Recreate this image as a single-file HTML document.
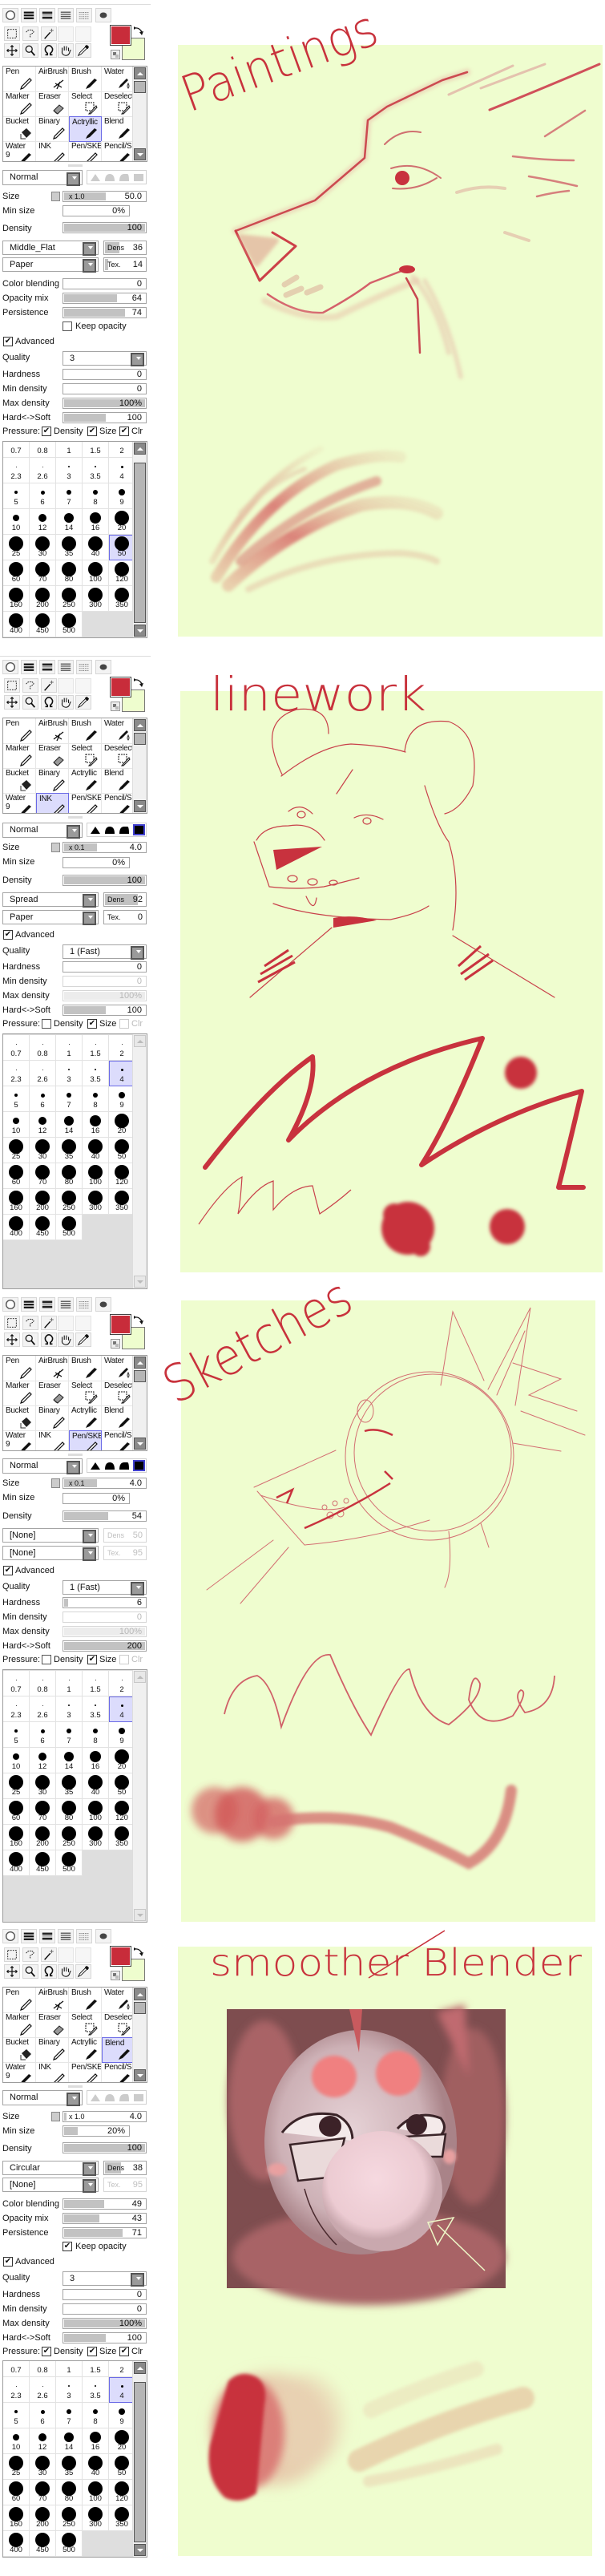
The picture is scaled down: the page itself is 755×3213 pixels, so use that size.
<!DOCTYPE html>
<html><head><meta charset="utf-8">
<style>
*{box-sizing:border-box;margin:0;padding:0}
body{width:755px;height:3213px;background:#fff;position:relative;overflow:hidden;font-family:"Liberation Sans",sans-serif;font-size:11px;color:#111}
.a{position:absolute}
.pan{position:absolute;left:0;width:190px;height:800px}
.hl{position:absolute;left:0;width:188px;height:1px;background:#dcdcdc}
.b{position:absolute;width:20px;height:18px;border:1px solid #d6d6d6;background:#f3f3f3}
.b svg{width:100%;height:100%;display:block}
.e{position:absolute;width:20px;height:19px;border:1px solid #e4e4e4;background:#f6f6f6}
.red{position:absolute;left:137px;top:31px;width:27px;height:26px;background:#c82c3a;border:1px solid #444;z-index:2;box-shadow:0 0 0 1px #fff inset}
.grn{position:absolute;left:152px;top:47px;width:29px;height:28px;background:#eefdce;border:1px solid #777}
.tg{position:absolute;left:3px;top:82px;width:181px;height:120px;border:1px solid #9c9c9c;background:#fff;overflow:hidden}
.tc{position:absolute;width:41px;height:32px;border-right:1px solid #e6e6e6;border-bottom:1px solid #e6e6e6;font-size:10px;padding:1px 0 0 3px;white-space:nowrap;overflow:hidden;letter-spacing:-.3px}
.tc svg{position:absolute;right:4px;bottom:2px;width:16px;height:16px}
.tc.s{background:#dcdcfc;border:1px solid #6a6ae6}
.sb{position:absolute;right:0;top:0;width:18px;height:100%;background:#f0f0f0;border-left:1px solid #ddd}
.ar{position:absolute;left:1px;width:15px;height:15px;border:1px solid #555;background:#8a8a8a}
.ar.u{top:1px}.ar.d{bottom:1px}
.ar:after{content:"";position:absolute;left:3px;border:4px solid transparent}
.ar.u:after{border-bottom:4px solid #fff;top:1px}
.ar.d:after{border-top:4px solid #fff;top:5px}
.ar.lt{background:#e8e8e8;border-color:#c8c8c8}
.ar.lt.u:after{border-bottom-color:#bbb}.ar.lt.d:after{border-top-color:#bbb}
.th{position:absolute;left:1px;width:15px;border:1px solid #555;background:#b6b6b6}
.lb{position:absolute;left:3px;font-size:11px;white-space:nowrap}
.sl{position:absolute;left:78px;width:105px;height:14px;border:1px solid #a4a4a4;background:#fff}
.sl i{position:absolute;left:1px;top:1px;bottom:1px;background:#c2c2c2}
.sl b{position:absolute;right:5px;top:0;font-weight:normal;line-height:12px;font-size:11px}
.sl u{position:absolute;left:7px;top:0;text-decoration:none;line-height:12px;font-size:9px}
.sl.dis{border-color:#d6d6d6}.sl.dis b{color:#b8b8b8}.sl.dis i{background:#ececec}
.dd{position:absolute;left:3px;width:120px;height:18px;border:1px solid #a4a4a4;background:#fff;padding-left:8px;line-height:16px;font-size:11px}
.dd:after{content:"";position:absolute;right:2px;top:1px;width:13px;height:13px;border:2px solid #555;background:#9a9a9a}
.dd:before{content:"";position:absolute;right:6px;top:6px;border:3px solid transparent;border-top:4px solid #fff;z-index:2}
.sm{position:absolute;left:129px;width:54px;height:18px;border:1px solid #a4a4a4;background:#fff;font-size:9px;line-height:16px}
.sm i{position:absolute;left:1px;top:1px;bottom:1px;background:#c2c2c2}
.sm u{position:absolute;left:4px;text-decoration:none}
.sm b{position:absolute;right:4px;font-weight:normal;font-size:11px}
.sm.dis{border-color:#d6d6d6;color:#c0c0c0}
.cb{position:absolute;width:12px;height:12px;border:1px solid #333;background:#fff;font-size:10px;line-height:10px;text-align:center}
.cb.off{border-color:#555}.cb.dis{border-color:#ccc}
.bg{position:absolute;left:3px;width:181px;border:1px solid #9c9c9c;background:#dedede;overflow:hidden}
.cells{position:absolute;left:0;width:165px;display:flex;flex-wrap:wrap}
.c{position:relative;width:33px;height:32px;background:#fff;border-right:1px solid #e2e2e2;border-bottom:1px solid #e2e2e2;font-size:9.5px;text-align:center}
.c i{position:absolute;width:var(--d);height:var(--d);left:calc(50% - var(--d)/2);top:calc(11px - var(--d)/2);background:#000;border-radius:50%}
.c s{position:absolute;left:0;right:0;bottom:2px;text-decoration:none;line-height:11px}
.c.s{background:#dcdcfc;outline:1px solid #6a6ae6;outline-offset:-1px}
.shp{position:absolute;left:108px;width:75px;height:18px;border:1px solid #d0d0d0;background:#fff}
.nm{position:absolute;left:3px;width:100px;height:19px;border:1px solid #a4a4a4;background:#fff;padding-left:8px;line-height:17px;font-size:11px}
.nm:after{content:"";position:absolute;right:2px;top:2px;width:13px;height:13px;border:2px solid #555;background:#9a9a9a}
.nm:before{content:"";position:absolute;right:6px;top:7px;border:3px solid transparent;border-top:4px solid #fff;z-index:2}
.ttl{font-family:"DejaVu Sans","Liberation Sans",sans-serif;font-weight:200;fill:#c8323c}
</style></head><body>

<svg width="0" height="0" style="position:absolute">
<defs>
<symbol id="pen" viewBox="0 0 16 16"><path d="M2 15 L3 12 L13 2 L15 4 L5 14 Z" fill="#fff" stroke="#111" stroke-width="1.2"/></symbol>
<symbol id="brush" viewBox="0 0 16 16"><path d="M1 15 L3 11 L12 2 L15 4 L6 13 Z" fill="#111"/></symbol>
<symbol id="water" viewBox="0 0 16 16"><path d="M1 14 L3 10 L11 2 L13 4 L5 12 Z" fill="#111"/><path d="M13 8 Q15 12 13 14 Q11 12 13 8Z" fill="#fff" stroke="#333"/></symbol>
<symbol id="air" viewBox="0 0 16 16"><path d="M2 13 L14 4 M4 8 L12 13 M6 15 L10 6" stroke="#111" stroke-width="1.3" fill="none"/></symbol>
<symbol id="eras" viewBox="0 0 16 16"><path d="M2 11 L9 4 L14 8 L7 15 Z" fill="#999" stroke="#222"/><path d="M2 11 L5 14 L7 15" stroke="#222" fill="#fff"/></symbol>
<symbol id="sel" viewBox="0 0 16 16"><rect x="1" y="1" width="10" height="10" fill="none" stroke="#111" stroke-dasharray="2 1"/><path d="M5 15 L14 5 L15 7 L7 15Z" fill="#fff" stroke="#111"/></symbol>
<symbol id="bucket" viewBox="0 0 16 16"><path d="M3 7 L9 2 L15 8 L9 14 Z" fill="#222"/><path d="M2 9 L2 15 L8 15" fill="none" stroke="#333"/></symbol>
</defs></svg>

<svg class="a" style="left:0;top:0" width="755" height="3213" viewBox="0 0 755 3213">
<defs>
<linearGradient id="pk" x1="0" y1="1" x2="1" y2="0"><stop offset="0" stop-color="#e8c9a8"/><stop offset=".45" stop-color="#d8706c"/><stop offset="1" stop-color="#e5c0a0" stop-opacity=".3"/></linearGradient>
<radialGradient id="blob"><stop offset="0" stop-color="#c8343e"/><stop offset=".7" stop-color="#cc4a50" stop-opacity=".9"/><stop offset="1" stop-color="#d06060" stop-opacity="0"/></radialGradient>
<radialGradient id="face" cx=".45" cy=".45"><stop offset="0" stop-color="#e6d2d6"/><stop offset=".75" stop-color="#cdb1b6"/><stop offset="1" stop-color="#a98388"/></radialGradient>
<radialGradient id="snout" cx=".45" cy=".4"><stop offset="0" stop-color="#f6d9e0"/><stop offset=".8" stop-color="#eccbd2"/><stop offset="1" stop-color="#c9a8ae"/></radialGradient>
<filter id="bl2" x="-20%" y="-20%" width="140%" height="140%"><feGaussianBlur stdDeviation="2"/></filter>
<filter id="bl5" x="-30%" y="-30%" width="160%" height="160%"><feGaussianBlur stdDeviation="5"/></filter>
<filter id="bl9" x="-40%" y="-40%" width="180%" height="180%"><feGaussianBlur stdDeviation="9"/></filter>
</defs>

<!-- SECTION 1 -->
<rect x="222" y="56" width="530" height="738" fill="#effdcf"/>
<text class="ttl" x="236" y="140" transform="rotate(-20 236 140)" font-size="62" textLength="255" lengthAdjust="spacingAndGlyphs">Paintings</text>
<g fill="none" stroke-linecap="round" stroke-linejoin="round">
<path d="M294 288 L393 250 L455 197 L459 150 L483 133 L552 100 L583 90" stroke="#eac8b0" stroke-width="9" opacity=".6" filter="url(#bl2)"/>
<path d="M294 288 L393 250 L455 197 L459 150 L483 133 L552 100 L583 90" stroke="#cc4a50" stroke-width="2.5"/>
<path d="M611 137 Q690 105 748 80" stroke="#d0505a" stroke-width="3"/>
<path d="M560 118 Q600 100 640 82 M600 110 Q640 95 680 80" stroke="#e0a8a0" stroke-width="3" opacity=".7"/>
<path d="M294 288 L324 350 L369 307 L340 290" stroke="#cc4048" stroke-width="3"/>
<path d="M300 295 L320 330 L345 300 Z" fill="#e0a090" stroke="#e0a090" stroke-width="6" opacity=".6" filter="url(#bl2)"/>
<path d="M334 367 Q370 392 403 390 Q440 370 462 353 L514 333" stroke="#d4606a" stroke-width="2.5"/>
<path d="M330 375 Q380 400 420 395 Q470 370 520 350" stroke="#e8c0a8" stroke-width="8" opacity=".5" filter="url(#bl2)"/>
<ellipse cx="508" cy="336" rx="10" ry="5" fill="#c8323e" stroke="none"/>
<path d="M507 347 L521 373 L524 440" stroke="#c84850" stroke-width="2.5"/>
<path d="M515 345 Q545 380 560 440 M530 350 Q560 400 575 470" stroke="#e8c8b0" stroke-width="6" opacity=".6" filter="url(#bl2)"/>
<path d="M355 355 L370 346 M357 368 L376 360 M383 365 L400 358" stroke="#e4d0b0" stroke-width="7"/>
<ellipse cx="502" cy="222" rx="9" ry="9" fill="#c8323e" stroke="none"/>
<path d="M488 210 Q520 200 550 222 M490 235 Q520 238 545 222 M480 180 Q500 160 525 165" stroke="#d07070" stroke-width="2"/>
<path d="M640 195 Q680 200 716 200 M660 220 Q690 225 720 232 M670 245 Q690 240 710 238 M680 170 L730 138" stroke="#d06068" stroke-width="2.5" opacity=".8"/>
<path d="M570 240 Q600 230 630 235 M630 290 L660 300" stroke="#e0b0a0" stroke-width="4" opacity=".6"/>
<g opacity=".85" filter="url(#bl2)">
<path d="M270 720 Q330 620 420 580 Q470 565 500 570" stroke="url(#pk)" stroke-width="14"/>
<path d="M265 700 Q320 600 400 560" stroke="url(#pk)" stroke-width="8" opacity=".6"/>
<path d="M285 730 Q360 660 450 630 Q510 620 545 640" stroke="url(#pk)" stroke-width="16"/>
<path d="M300 700 Q380 630 470 600" stroke="#d46868" stroke-width="12" opacity=".6"/>
<path d="M310 735 Q400 690 500 690 Q530 692 545 700" stroke="#e4c0a4" stroke-width="8" opacity=".6"/>
<path d="M300 640 Q340 600 380 585" stroke="#e6c8aa" stroke-width="6" opacity=".7"/>
</g>
</g>

<!-- SECTION 2 -->
<rect x="225" y="862" width="527" height="725" fill="#effdcf"/>
<text class="ttl" x="262" y="886" font-size="58" textLength="270" lengthAdjust="spacingAndGlyphs">linework</text>
<g fill="none" stroke="#c8404a" stroke-width="1.2" stroke-linecap="round">
<path d="M352 966 Q320 900 370 885 Q410 880 410 915"/>
<path d="M505 937 Q510 895 560 900 Q600 915 590 980 Q575 1010 555 1015"/>
<path d="M351 968 Q400 930 438 928 Q480 930 506 938"/>
<path d="M320 1048 Q330 1030 360 1030 Q390 1025 405 1048"/>
<path d="M317 1050 L336 1106 Q370 1110 404 1106 Q430 1100 448 1095"/>
<path d="M341 1127 Q390 1145 487 1147 Q520 1140 535 1130"/>
<path d="M414 1157 L312 1244 M565 1167 L692 1244 M560 1050 Q575 1100 565 1160 M530 980 Q545 1030 560 1050"/>
<path d="M360 1012 Q375 1000 390 1015 M442 1020 Q458 1012 478 1022 M420 990 L440 960"/>
<ellipse cx="376" cy="1016" rx="5" ry="4"/><ellipse cx="458" cy="1024" rx="5" ry="4"/>
<ellipse cx="365" cy="1096" rx="6" ry="4"/><ellipse cx="390" cy="1100" rx="6" ry="4"/><ellipse cx="416" cy="1101" rx="5" ry="3"/>
<path d="M382 1118 Q392 1140 395 1120"/>
</g>
<path d="M341 1060 L402 1056 L345 1085 Z" fill="#c8323e"/>
<path d="M416 1145 Q440 1140 470 1148 L416 1157 Z" fill="#c8323e"/>
<path d="M330 1205 L360 1185 M325 1215 L365 1192 M322 1225 L368 1200 M572 1205 L600 1180 M575 1215 L610 1190 M580 1222 L615 1198" stroke="#c8323e" stroke-width="3"/>
<path d="M256 1456 Q330 1360 390 1318 Q395 1360 360 1422 Q450 1330 602 1295 Q560 1400 526 1453 Q620 1390 726 1361 Q710 1430 697 1481 L728 1481" fill="none" stroke="#c8323e" stroke-width="6" stroke-linejoin="round" stroke-linecap="round"/>
<g filter="url(#bl2)">
<circle cx="650" cy="1338" r="20" fill="#c8323e"/>
<circle cx="509" cy="1532" r="33" fill="#c8323e"/><circle cx="492" cy="1515" r="14" fill="#c8323e"/><circle cx="525" cy="1555" r="12" fill="#c8323e"/>
<circle cx="633" cy="1530" r="22" fill="#c8323e"/>
</g>
<path d="M248 1527 Q280 1480 302 1468 Q300 1500 297 1514 Q320 1480 341 1473 L341 1509 Q365 1480 390 1479 Q395 1500 399 1514 Q420 1500 438 1484" fill="none" stroke="#c8404a" stroke-width="1.2"/>

<!-- SECTION 3 -->
<rect x="226" y="1622" width="517" height="775" fill="#effdcf"/>
<text class="ttl" x="219" y="1752" transform="rotate(-28 219 1752)" font-size="64" textLength="255" lengthAdjust="spacingAndGlyphs">Sketches</text>
<g fill="none" stroke="#d06068" stroke-width="1" stroke-linecap="round" opacity=".9">
<circle cx="536" cy="1816" r="105"/><circle cx="540" cy="1812" r="98"/>
<path d="M550 1728 L565 1636 L604 1722 M609 1733 L662 1631 L643 1753 M620 1740 L655 1660"/>
<path d="M317 1855 L419 1809 M321 1860 L380 1927 Q460 1920 536 1896 M325 1865 Q400 1890 430 1880"/>
<path d="M341 1921 L258 1983 M360 1930 L300 2000 M560 1910 Q565 1960 555 1980 M600 1900 L610 1930"/>
<path d="M640 1700 L700 1720 L660 1740 L720 1760 M650 1760 L730 1790 M640 1800 L700 1810"/>
<ellipse cx="456" cy="1760" rx="10" ry="14"/>
<circle cx="405" cy="1880" r="3"/><circle cx="418" cy="1875" r="3"/><circle cx="432" cy="1872" r="3"/><circle cx="412" cy="1890" r="4"/><circle cx="425" cy="1888" r="4"/>
</g>
<path d="M380 1906 Q440 1880 487 1850 M455 1785 Q470 1780 490 1790 M480 1835 L490 1845" fill="none" stroke="#c8323e" stroke-width="2.5"/>
<path d="M345 1868 L365 1858 L358 1875" fill="none" stroke="#c8323e" stroke-width="2.5"/>
<path d="M280 2138 Q290 2095 321 2090 Q340 2100 351 2154 Q385 2060 412 2064 Q440 2130 463 2164 Q500 2080 511 2082 Q525 2140 560 2151 Q600 2120 599 2100 Q590 2080 585 2120 Q600 2160 640 2140 Q660 2110 650 2108 Q640 2115 655 2136 Q690 2130 692 2090" fill="none" stroke="#d06068" stroke-width="1.8"/>
<g opacity=".85">
<g filter="url(#bl5)">
<circle cx="268" cy="2258" r="29" fill="#d04a52" opacity=".7"/>
<circle cx="302" cy="2263" r="34" fill="#cc3a44" opacity=".8"/>
<circle cx="341" cy="2268" r="26" fill="#d04a52" opacity=".8"/>
</g>
<path d="M341 2272 Q420 2260 487 2279 Q540 2300 585 2324 Q630 2300 638 2233" fill="none" stroke="#d05a60" stroke-width="14" stroke-linecap="round" opacity=".8" filter="url(#bl2)"/>
</g>

<!-- SECTION 4 -->
<rect x="222" y="2428" width="517" height="760" fill="#effdcf"/>
<text class="ttl" x="262" y="2464" font-size="46" textLength="464" lengthAdjust="spacingAndGlyphs">smoother Blender</text>
<path d="M460 2467 L555 2408" stroke="#c8323c" stroke-width="1.5"/>
<rect x="283" y="2506" width="348" height="348" fill="#7e4d4f"/>
<g filter="url(#bl5)">
<ellipse cx="330" cy="2620" rx="45" ry="100" fill="#a96466"/>
<ellipse cx="590" cy="2640" rx="40" ry="110" fill="#a05e60"/>
<path d="M545 2510 L580 2500 L585 2590 Z" fill="#c06a70"/>
<ellipse cx="460" cy="2815" rx="170" ry="60" fill="#a86466"/>
</g>
<ellipse cx="450" cy="2672" rx="120" ry="140" fill="url(#face)"/>
<path d="M436 2506 L448 2560 L452 2506 Z" fill="#c85a5e"/>
<g filter="url(#bl2)">
<ellipse cx="417" cy="2590" rx="28" ry="26" fill="#f08080"/>
<ellipse cx="497" cy="2586" rx="28" ry="28" fill="#f08080"/>
<ellipse cx="346" cy="2706" rx="12" ry="8" fill="#e8a0a0"/><ellipse cx="561" cy="2690" rx="8" ry="9" fill="#e8a0a0"/>
</g>
<path d="M352 2660 Q375 2630 420 2638 Q440 2648 440 2670" fill="#f4eaea" stroke="#3a2428" stroke-width="3"/>
<ellipse cx="412" cy="2652" rx="14" ry="13" fill="#3c2228"/>
<path d="M496 2655 Q520 2630 550 2642 Q560 2655 548 2665" fill="#f4eaea" stroke="#3a2428" stroke-width="3"/>
<ellipse cx="520" cy="2650" rx="13" ry="13" fill="#3c2228"/>
<path d="M362 2675 L430 2667 L418 2715 L372 2720 Z" fill="#eadada" stroke="#3a2428" stroke-width="2.5"/>
<path d="M505 2665 L556 2662 L552 2690 L515 2690 Z" fill="#eadada" stroke="#3a2428" stroke-width="2.5"/>
<circle cx="477" cy="2733" r="75" fill="url(#snout)"/>
<path d="M380 2730 Q390 2770 420 2800" fill="none" stroke="#4a2a2e" stroke-width="1.5"/>
<path d="M534 2772 L566 2766 L546 2800 Z M546 2775 L605 2832" fill="none" stroke="#eef8c8" stroke-width="1.5"/>
<g filter="url(#bl9)">
<ellipse cx="340" cy="3030" rx="75" ry="70" fill="#e4b8a0" opacity=".7"/>
<ellipse cx="380" cy="3020" rx="50" ry="60" fill="#ead6b4" opacity=".6"/>
</g>
<g filter="url(#bl5)">
<ellipse cx="310" cy="3035" rx="45" ry="70" fill="#d86a6a" opacity=".8"/>
</g>
<path d="M285 2970 Q300 2955 320 2965 Q335 2975 330 3000 L320 3110 Q300 3125 280 3115 Q255 3090 262 3050 Z" fill="#c8323e" filter="url(#bl2)"/>
<g filter="url(#bl2)">
<path d="M448 3069 Q550 3020 653 2991" stroke="#e6c4a0" stroke-width="28" stroke-linecap="round" opacity=".7" fill="none"/>
<path d="M460 3095 Q540 3080 620 3055" stroke="#ead2b0" stroke-width="14" stroke-linecap="round" opacity=".55" fill="none"/>
<path d="M463 3006 Q530 2975 594 2955" stroke="#e8d8b4" stroke-width="20" stroke-linecap="round" opacity=".45" fill="none"/>
</g>
</svg>

<!-- ============ PANEL 1 (top 0) ============ -->
<div class="pan" style="top:0px">
<div class="hl" style="top:5px"></div>
<div class="b" style="left:3px;top:10px"><svg viewBox="0 0 20 18"><circle cx="10" cy="9" r="6" fill="#fff" stroke="#555" stroke-width="1.6"/></svg></div>
<div class="b" style="left:26px;top:10px"><svg viewBox="0 0 20 18"><g fill="#111"><rect x="3" y="4" width="14" height="2.5"/><rect x="3" y="8" width="14" height="2.5"/><rect x="3" y="12" width="14" height="2.5"/></g></svg></div>
<div class="b" style="left:49px;top:10px"><svg viewBox="0 0 20 18"><g fill="#222"><rect x="3" y="4" width="14" height="3"/><rect x="3" y="8" width="14" height="1.5" fill="#888"/><rect x="3" y="11" width="14" height="3"/></g></svg></div>
<div class="b" style="left:72px;top:10px"><svg viewBox="0 0 20 18"><g fill="#555"><rect x="3" y="4" width="14" height="1.5"/><rect x="3" y="7" width="14" height="1.5"/><rect x="3" y="10" width="14" height="1.5"/><rect x="3" y="13" width="14" height="1.5"/></g></svg></div>
<div class="b" style="left:95px;top:10px"><svg viewBox="0 0 20 18"><g fill="none" stroke="#555" stroke-dasharray="1 1"><path d="M3 5H17M3 8H17M3 11H17M3 14H17"/></g></svg></div>
<div class="b" style="left:119px;top:10px"><svg viewBox="0 0 20 18"><ellipse cx="10" cy="9" rx="5" ry="4" fill="#444"/></svg></div>
<div class="b" style="left:5px;top:33px"><svg viewBox="0 0 20 18"><rect x="4" y="3" width="12" height="12" fill="none" stroke="#111" stroke-dasharray="2 1.5"/></svg></div>
<div class="b" style="left:28px;top:33px"><svg viewBox="0 0 20 18"><path d="M4 7 Q6 3 12 4 Q17 6 12 9 Q8 10 10 14" fill="none" stroke="#111" stroke-dasharray="2 1"/></svg></div>
<div class="b" style="left:51px;top:33px"><svg viewBox="0 0 20 18"><path d="M4 16 L12 7" stroke="#111" stroke-width="1.6"/><path d="M14 2V7M11.5 4.5H16.5" stroke="#666"/></svg></div>
<div class="e" style="left:72px;top:33px"></div><div class="e" style="left:94px;top:33px"></div>
<div class="b" style="left:5px;top:54px"><svg viewBox="0 0 20 18"><path d="M10 2V16M3 9H17M8 4L10 2L12 4M8 14L10 16L12 14M5 7L3 9L5 11M15 7L17 9L15 11" stroke="#111" stroke-width="1.3" fill="none"/></svg></div>
<div class="b" style="left:28px;top:54px"><svg viewBox="0 0 20 18"><circle cx="8" cy="7" r="4.5" fill="none" stroke="#111" stroke-width="1.4"/><path d="M11 10L16 16" stroke="#111" stroke-width="2"/></svg></div>
<div class="b" style="left:51px;top:54px"><svg viewBox="0 0 20 18"><path d="M5 15H8V13Q4 10 5 6Q7 2 10 2Q13 2 15 6Q16 10 12 13V15H15" fill="none" stroke="#111" stroke-width="1.8"/></svg></div>
<div class="b" style="left:72px;top:54px"><svg viewBox="0 0 20 18"><path d="M5 10V5M8 9V3M11 9V3M14 10V5M5 10Q4 15 10 16Q15 16 16 10L17 8" fill="none" stroke="#111" stroke-width="1.2"/></svg></div>
<div class="b" style="left:94px;top:54px"><svg viewBox="0 0 20 18"><path d="M3 16L5 12L13 4L15 6L7 14Z" fill="#fff" stroke="#111"/><path d="M12 3L15 1L18 4L16 7Z" fill="#111"/></svg></div>
<div class="grn"></div><div class="red"></div>
<svg class="a" style="left:166px;top:32px" width="14" height="14" viewBox="0 0 14 14"><path d="M2 3Q8 2 11 8" fill="none" stroke="#111" stroke-width="1.3"/><path d="M8 8L11 12L13 7Z" fill="#111"/><path d="M1 1L4 3L1 5Z" fill="#111"/></svg>
<div class="a" style="left:138px;top:62px;width:12px;height:12px;border:1px solid #999;background:#eee"><div class="a" style="left:2px;top:2px;width:4px;height:4px;background:#777"></div><div class="a" style="left:5px;top:5px;width:4px;height:4px;background:#bbb"></div></div>
<div class="tg">
<div class="tc" style="left:0;top:0">Pen<svg><use href="#pen"/></svg></div>
<div class="tc" style="left:41px;top:0">AirBrush<svg><use href="#air"/></svg></div>
<div class="tc" style="left:82px;top:0">Brush<svg><use href="#brush"/></svg></div>
<div class="tc" style="left:123px;top:0">Water<svg><use href="#water"/></svg></div>
<div class="tc" style="left:0;top:31px">Marker<svg><use href="#pen"/></svg></div>
<div class="tc" style="left:41px;top:31px">Eraser<svg><use href="#eras"/></svg></div>
<div class="tc" style="left:82px;top:31px">Select<svg><use href="#sel"/></svg></div>
<div class="tc" style="left:123px;top:31px">Deselect<svg><use href="#sel"/></svg></div>
<div class="tc" style="left:0;top:62px">Bucket<svg><use href="#bucket"/></svg></div>
<div class="tc" style="left:41px;top:62px">Binary<svg><use href="#pen"/></svg></div>
<div class="tc s" style="left:82px;top:62px">Actryllic<svg><use href="#brush"/></svg></div>
<div class="tc" style="left:123px;top:62px">Blend<svg><use href="#brush"/></svg></div>
<div class="tc" style="left:0;top:93px">Water<br>9<svg><use href="#brush"/></svg></div>
<div class="tc" style="left:41px;top:93px">INK<svg><use href="#pen"/></svg></div>
<div class="tc" style="left:82px;top:93px">Pen/SKE<svg><use href="#pen"/></svg></div>
<div class="tc" style="left:123px;top:93px">Pencil/SI<svg><use href="#brush"/></svg></div>
<div class="sb"><div class="ar u"></div><div class="th" style="top:18px;height:15px"></div><div class="ar d"></div></div>
</div>
<div class="a" style="left:85px;top:205px;width:18px;height:3px;background:#ddd"></div>
<div class="nm" style="top:212px">Normal</div>
<div class="shp" style="top:212px"><svg width="73" height="16"><g fill="#ccc"><path d="M4 13L10 4L16 13Z"/><path d="M22 13Q22 4 28 4Q34 4 34 13Z"/><path d="M40 13Q40 4 46 4H50Q52 4 52 13Z"/><rect x="58" y="4" width="12" height="9"/></g></svg></div>
<div class="lb" style="top:239px">Size</div>
<div class="a" style="left:64px;top:239px;width:11px;height:12px;border:1px solid #888;background:#ccc"></div>
<div class="sl" style="top:238px"><i style="width:52px"></i><u>x 1.0</u><b>50.0</b></div>
<div class="lb" style="top:257px">Min size</div>
<div class="sl" style="top:256px;width:84px"><b>0%</b></div>
<div class="lb" style="top:279px">Density</div>
<div class="sl" style="top:277px"><i style="right:1px"></i><b>100</b></div>
<div class="dd" style="top:300px">Middle_Flat</div>
<div class="sm" style="top:300px"><i style="width:18px"></i><u>Dens</u><b>36</b></div>
<div class="dd" style="top:321px">Paper</div>
<div class="sm" style="top:321px"><i style="width:4px"></i><u>Tex.</u><b>14</b></div>
<div class="lb" style="top:348px">Color blending</div>
<div class="sl" style="top:347px"><b>0</b></div>
<div class="lb" style="top:366px">Opacity mix</div>
<div class="sl" style="top:365px"><i style="width:66px"></i><b>64</b></div>
<div class="lb" style="top:384px">Persistence</div>
<div class="sl" style="top:383px"><i style="width:76px"></i><b>74</b></div>
<div class="cb off" style="left:78px;top:401px"></div><div class="lb" style="left:94px;top:401px">Keep opacity</div>
<div class="cb" style="left:4px;top:420px">✔</div><div class="lb" style="left:19px;top:420px">Advanced</div>
<div class="lb" style="top:440px">Quality</div>
<div class="dd" style="left:78px;top:438px;width:105px">3</div>
<div class="lb" style="top:461px">Hardness</div><div class="sl" style="top:460px"><b>0</b></div>
<div class="lb" style="top:479px">Min density</div><div class="sl" style="top:478px"><b>0</b></div>
<div class="lb" style="top:497px">Max density</div><div class="sl" style="top:496px"><i style="right:1px"></i><b>100%</b></div>
<div class="lb" style="top:515px">Hard&lt;-&gt;Soft</div><div class="sl" style="top:514px"><i style="width:52px"></i><b>100</b></div>
<div class="lb" style="top:532px">Pressure:</div>
<div class="cb" style="left:52px;top:532px">✔</div><div class="lb" style="left:67px;top:532px">Density</div>
<div class="cb" style="left:109px;top:532px">✔</div><div class="lb" style="left:124px;top:532px">Size</div>
<div class="cb" style="left:149px;top:532px">✔</div><div class="lb" style="left:164px;top:532px">Clr</div>
<div class="bg" style="top:550px;height:246px">
<div class="cells" style="top:-12px">
<div class="c"><s>0.7</s></div><div class="c"><s>0.8</s></div><div class="c"><s>1</s></div><div class="c"><s>1.5</s></div><div class="c"><s>2</s></div>
<div class="c"><i style="--d:1px"></i><s>2.3</s></div><div class="c"><i style="--d:1px"></i><s>2.6</s></div><div class="c"><i style="--d:2px"></i><s>3</s></div><div class="c"><i style="--d:2px"></i><s>3.5</s></div><div class="c"><i style="--d:3px"></i><s>4</s></div>
<div class="c"><i style="--d:4px"></i><s>5</s></div><div class="c"><i style="--d:5px"></i><s>6</s></div><div class="c"><i style="--d:6px"></i><s>7</s></div><div class="c"><i style="--d:6px"></i><s>8</s></div><div class="c"><i style="--d:8px"></i><s>9</s></div>
<div class="c"><i style="--d:8px"></i><s>10</s></div><div class="c"><i style="--d:10px"></i><s>12</s></div><div class="c"><i style="--d:12px"></i><s>14</s></div><div class="c"><i style="--d:14px"></i><s>16</s></div><div class="c"><i style="--d:18px"></i><s>20</s></div>
<div class="c"><i style="--d:18px"></i><s>25</s></div><div class="c"><i style="--d:18px"></i><s>30</s></div><div class="c"><i style="--d:18px"></i><s>35</s></div><div class="c"><i style="--d:18px"></i><s>40</s></div><div class="c s"><i style="--d:18px"></i><s>50</s></div>
<div class="c"><i style="--d:18px"></i><s>60</s></div><div class="c"><i style="--d:18px"></i><s>70</s></div><div class="c"><i style="--d:18px"></i><s>80</s></div><div class="c"><i style="--d:18px"></i><s>100</s></div><div class="c"><i style="--d:18px"></i><s>120</s></div>
<div class="c"><i style="--d:18px"></i><s>160</s></div><div class="c"><i style="--d:18px"></i><s>200</s></div><div class="c"><i style="--d:18px"></i><s>250</s></div><div class="c"><i style="--d:18px"></i><s>300</s></div><div class="c"><i style="--d:18px"></i><s>350</s></div>
<div class="c"><i style="--d:18px"></i><s>400</s></div><div class="c"><i style="--d:18px"></i><s>450</s></div><div class="c"><i style="--d:18px"></i><s>500</s></div>
</div>
<div class="sb"><div class="ar u"></div><div class="th" style="top:26px;bottom:18px"></div><div class="ar d"></div></div>
</div>
</div>

<!-- ============ PANEL 2 (top 813) ============ -->
<div class="pan" style="top:813px">
<div class="hl" style="top:5px"></div>
<div class="b" style="left:3px;top:10px"><svg viewBox="0 0 20 18"><circle cx="10" cy="9" r="6" fill="#fff" stroke="#555" stroke-width="1.6"/></svg></div>
<div class="b" style="left:26px;top:10px"><svg viewBox="0 0 20 18"><g fill="#111"><rect x="3" y="4" width="14" height="2.5"/><rect x="3" y="8" width="14" height="2.5"/><rect x="3" y="12" width="14" height="2.5"/></g></svg></div>
<div class="b" style="left:49px;top:10px"><svg viewBox="0 0 20 18"><g fill="#222"><rect x="3" y="4" width="14" height="3"/><rect x="3" y="8" width="14" height="1.5" fill="#888"/><rect x="3" y="11" width="14" height="3"/></g></svg></div>
<div class="b" style="left:72px;top:10px"><svg viewBox="0 0 20 18"><g fill="#555"><rect x="3" y="4" width="14" height="1.5"/><rect x="3" y="7" width="14" height="1.5"/><rect x="3" y="10" width="14" height="1.5"/><rect x="3" y="13" width="14" height="1.5"/></g></svg></div>
<div class="b" style="left:95px;top:10px"><svg viewBox="0 0 20 18"><g fill="none" stroke="#555" stroke-dasharray="1 1"><path d="M3 5H17M3 8H17M3 11H17M3 14H17"/></g></svg></div>
<div class="b" style="left:119px;top:10px"><svg viewBox="0 0 20 18"><ellipse cx="10" cy="9" rx="5" ry="4" fill="#444"/></svg></div>
<div class="b" style="left:5px;top:33px"><svg viewBox="0 0 20 18"><rect x="4" y="3" width="12" height="12" fill="none" stroke="#111" stroke-dasharray="2 1.5"/></svg></div>
<div class="b" style="left:28px;top:33px"><svg viewBox="0 0 20 18"><path d="M4 7 Q6 3 12 4 Q17 6 12 9 Q8 10 10 14" fill="none" stroke="#111" stroke-dasharray="2 1"/></svg></div>
<div class="b" style="left:51px;top:33px"><svg viewBox="0 0 20 18"><path d="M4 16 L12 7" stroke="#111" stroke-width="1.6"/><path d="M14 2V7M11.5 4.5H16.5" stroke="#666"/></svg></div>
<div class="e" style="left:72px;top:33px"></div><div class="e" style="left:94px;top:33px"></div>
<div class="b" style="left:5px;top:54px"><svg viewBox="0 0 20 18"><path d="M10 2V16M3 9H17M8 4L10 2L12 4M8 14L10 16L12 14M5 7L3 9L5 11M15 7L17 9L15 11" stroke="#111" stroke-width="1.3" fill="none"/></svg></div>
<div class="b" style="left:28px;top:54px"><svg viewBox="0 0 20 18"><circle cx="8" cy="7" r="4.5" fill="none" stroke="#111" stroke-width="1.4"/><path d="M11 10L16 16" stroke="#111" stroke-width="2"/></svg></div>
<div class="b" style="left:51px;top:54px"><svg viewBox="0 0 20 18"><path d="M5 15H8V13Q4 10 5 6Q7 2 10 2Q13 2 15 6Q16 10 12 13V15H15" fill="none" stroke="#111" stroke-width="1.8"/></svg></div>
<div class="b" style="left:72px;top:54px"><svg viewBox="0 0 20 18"><path d="M5 10V5M8 9V3M11 9V3M14 10V5M5 10Q4 15 10 16Q15 16 16 10L17 8" fill="none" stroke="#111" stroke-width="1.2"/></svg></div>
<div class="b" style="left:94px;top:54px"><svg viewBox="0 0 20 18"><path d="M3 16L5 12L13 4L15 6L7 14Z" fill="#fff" stroke="#111"/><path d="M12 3L15 1L18 4L16 7Z" fill="#111"/></svg></div>
<div class="grn"></div><div class="red"></div>
<svg class="a" style="left:166px;top:32px" width="14" height="14" viewBox="0 0 14 14"><path d="M2 3Q8 2 11 8" fill="none" stroke="#111" stroke-width="1.3"/><path d="M8 8L11 12L13 7Z" fill="#111"/><path d="M1 1L4 3L1 5Z" fill="#111"/></svg>
<div class="a" style="left:138px;top:62px;width:12px;height:12px;border:1px solid #999;background:#eee"><div class="a" style="left:2px;top:2px;width:4px;height:4px;background:#777"></div><div class="a" style="left:5px;top:5px;width:4px;height:4px;background:#bbb"></div></div>
<div class="tg">
<div class="tc" style="left:0;top:0">Pen<svg><use href="#pen"/></svg></div>
<div class="tc" style="left:41px;top:0">AirBrush<svg><use href="#air"/></svg></div>
<div class="tc" style="left:82px;top:0">Brush<svg><use href="#brush"/></svg></div>
<div class="tc" style="left:123px;top:0">Water<svg><use href="#water"/></svg></div>
<div class="tc" style="left:0;top:31px">Marker<svg><use href="#pen"/></svg></div>
<div class="tc" style="left:41px;top:31px">Eraser<svg><use href="#eras"/></svg></div>
<div class="tc" style="left:82px;top:31px">Select<svg><use href="#sel"/></svg></div>
<div class="tc" style="left:123px;top:31px">Deselect<svg><use href="#sel"/></svg></div>
<div class="tc" style="left:0;top:62px">Bucket<svg><use href="#bucket"/></svg></div>
<div class="tc" style="left:41px;top:62px">Binary<svg><use href="#pen"/></svg></div>
<div class="tc" style="left:82px;top:62px">Actryllic<svg><use href="#brush"/></svg></div>
<div class="tc" style="left:123px;top:62px">Blend<svg><use href="#brush"/></svg></div>
<div class="tc" style="left:0;top:93px">Water<br>9<svg><use href="#brush"/></svg></div>
<div class="tc s" style="left:41px;top:93px">INK<svg><use href="#pen"/></svg></div>
<div class="tc" style="left:82px;top:93px">Pen/SKE<svg><use href="#pen"/></svg></div>
<div class="tc" style="left:123px;top:93px">Pencil/SI<svg><use href="#brush"/></svg></div>
<div class="sb"><div class="ar u"></div><div class="th" style="top:18px;height:15px"></div><div class="ar d"></div></div>
</div>
<div class="a" style="left:85px;top:205px;width:18px;height:3px;background:#ddd"></div>
<div class="nm" style="top:213px">Normal</div>
<div class="shp" style="top:213px"><svg width="73" height="16"><g fill="#000"><path d="M4 13L10 4L16 13Z"/><path d="M22 13Q22 4 28 4Q34 4 34 13Z"/><path d="M40 13Q40 4 46 4H50Q52 4 52 13Z"/><rect x="57" y="1" width="15" height="14" fill="#4040d0"/><rect x="59" y="3" width="11" height="10"/></g></svg></div>
<div class="lb" style="top:238px">Size</div>
<div class="a" style="left:64px;top:238px;width:11px;height:12px;border:1px solid #888;background:#ccc"></div>
<div class="sl" style="top:237px"><i style="width:41px"></i><u>x 0.1</u><b>4.0</b></div>
<div class="lb" style="top:256px">Min size</div>
<div class="sl" style="top:256px;width:84px"><b>0%</b></div>
<div class="lb" style="top:279px">Density</div>
<div class="sl" style="top:278px"><i style="right:1px"></i><b>100</b></div>
<div class="dd" style="top:300px">Spread</div>
<div class="sm" style="top:300px"><i style="right:10px"></i><u>Dens</u><b>92</b></div>
<div class="dd" style="top:322px">Paper</div>
<div class="sm" style="top:322px"><u>Tex.</u><b>0</b></div>
<div class="cb" style="left:4px;top:347px">✔</div><div class="lb" style="left:19px;top:347px">Advanced</div>
<div class="lb" style="top:367px">Quality</div>
<div class="dd" style="left:78px;top:365px;width:105px">1 (Fast)</div>
<div class="lb" style="top:387px">Hardness</div><div class="sl" style="top:386px"><b>0</b></div>
<div class="lb" style="top:405px">Min density</div><div class="sl dis" style="top:404px"><b>0</b></div>
<div class="lb" style="top:423px">Max density</div><div class="sl dis" style="top:422px"><i style="right:1px"></i><b>100%</b></div>
<div class="lb" style="top:441px">Hard&lt;-&gt;Soft</div><div class="sl" style="top:440px"><i style="width:52px"></i><b>100</b></div>
<div class="lb" style="top:458px">Pressure:</div>
<div class="cb off" style="left:52px;top:458px"></div><div class="lb" style="left:67px;top:458px">Density</div>
<div class="cb" style="left:109px;top:458px">✔</div><div class="lb" style="left:124px;top:458px">Size</div>
<div class="cb dis" style="left:149px;top:458px"></div><div class="lb" style="left:164px;top:458px;color:#bbb">Clr</div>
<div class="bg" style="top:476px;height:319px">
<div class="cells" style="top:1px">
<div class="c"><i style="--d:1px"></i><s>0.7</s></div><div class="c"><i style="--d:1px"></i><s>0.8</s></div><div class="c"><i style="--d:1px"></i><s>1</s></div><div class="c"><i style="--d:1px"></i><s>1.5</s></div><div class="c"><i style="--d:1px"></i><s>2</s></div>
<div class="c"><i style="--d:1px"></i><s>2.3</s></div><div class="c"><i style="--d:1px"></i><s>2.6</s></div><div class="c"><i style="--d:2px"></i><s>3</s></div><div class="c"><i style="--d:2px"></i><s>3.5</s></div><div class="c s"><i style="--d:3px"></i><s>4</s></div>
<div class="c"><i style="--d:4px"></i><s>5</s></div><div class="c"><i style="--d:5px"></i><s>6</s></div><div class="c"><i style="--d:6px"></i><s>7</s></div><div class="c"><i style="--d:6px"></i><s>8</s></div><div class="c"><i style="--d:8px"></i><s>9</s></div>
<div class="c"><i style="--d:8px"></i><s>10</s></div><div class="c"><i style="--d:10px"></i><s>12</s></div><div class="c"><i style="--d:12px"></i><s>14</s></div><div class="c"><i style="--d:14px"></i><s>16</s></div><div class="c"><i style="--d:18px"></i><s>20</s></div>
<div class="c"><i style="--d:18px"></i><s>25</s></div><div class="c"><i style="--d:18px"></i><s>30</s></div><div class="c"><i style="--d:18px"></i><s>35</s></div><div class="c"><i style="--d:18px"></i><s>40</s></div><div class="c"><i style="--d:18px"></i><s>50</s></div>
<div class="c"><i style="--d:18px"></i><s>60</s></div><div class="c"><i style="--d:18px"></i><s>70</s></div><div class="c"><i style="--d:18px"></i><s>80</s></div><div class="c"><i style="--d:18px"></i><s>100</s></div><div class="c"><i style="--d:18px"></i><s>120</s></div>
<div class="c"><i style="--d:18px"></i><s>160</s></div><div class="c"><i style="--d:18px"></i><s>200</s></div><div class="c"><i style="--d:18px"></i><s>250</s></div><div class="c"><i style="--d:18px"></i><s>300</s></div><div class="c"><i style="--d:18px"></i><s>350</s></div>
<div class="c"><i style="--d:18px"></i><s>400</s></div><div class="c"><i style="--d:18px"></i><s>450</s></div><div class="c"><i style="--d:18px"></i><s>500</s></div>
</div>
<div class="sb"><div class="ar u lt"></div><div class="ar d lt"></div></div>
</div>
</div>

<!-- ============ PANEL 3 (top 1608) ============ -->
<div class="pan" style="top:1608px">
<div class="b" style="left:3px;top:10px"><svg viewBox="0 0 20 18"><circle cx="10" cy="9" r="6" fill="#fff" stroke="#555" stroke-width="1.6"/></svg></div>
<div class="b" style="left:26px;top:10px"><svg viewBox="0 0 20 18"><g fill="#111"><rect x="3" y="4" width="14" height="2.5"/><rect x="3" y="8" width="14" height="2.5"/><rect x="3" y="12" width="14" height="2.5"/></g></svg></div>
<div class="b" style="left:49px;top:10px"><svg viewBox="0 0 20 18"><g fill="#222"><rect x="3" y="4" width="14" height="3"/><rect x="3" y="8" width="14" height="1.5" fill="#888"/><rect x="3" y="11" width="14" height="3"/></g></svg></div>
<div class="b" style="left:72px;top:10px"><svg viewBox="0 0 20 18"><g fill="#555"><rect x="3" y="4" width="14" height="1.5"/><rect x="3" y="7" width="14" height="1.5"/><rect x="3" y="10" width="14" height="1.5"/><rect x="3" y="13" width="14" height="1.5"/></g></svg></div>
<div class="b" style="left:95px;top:10px"><svg viewBox="0 0 20 18"><g fill="none" stroke="#555" stroke-dasharray="1 1"><path d="M3 5H17M3 8H17M3 11H17M3 14H17"/></g></svg></div>
<div class="b" style="left:119px;top:10px"><svg viewBox="0 0 20 18"><ellipse cx="10" cy="9" rx="5" ry="4" fill="#444"/></svg></div>
<div class="b" style="left:5px;top:33px"><svg viewBox="0 0 20 18"><rect x="4" y="3" width="12" height="12" fill="none" stroke="#111" stroke-dasharray="2 1.5"/></svg></div>
<div class="b" style="left:28px;top:33px"><svg viewBox="0 0 20 18"><path d="M4 7 Q6 3 12 4 Q17 6 12 9 Q8 10 10 14" fill="none" stroke="#111" stroke-dasharray="2 1"/></svg></div>
<div class="b" style="left:51px;top:33px"><svg viewBox="0 0 20 18"><path d="M4 16 L12 7" stroke="#111" stroke-width="1.6"/><path d="M14 2V7M11.5 4.5H16.5" stroke="#666"/></svg></div>
<div class="e" style="left:72px;top:33px"></div><div class="e" style="left:94px;top:33px"></div>
<div class="b" style="left:5px;top:54px"><svg viewBox="0 0 20 18"><path d="M10 2V16M3 9H17M8 4L10 2L12 4M8 14L10 16L12 14M5 7L3 9L5 11M15 7L17 9L15 11" stroke="#111" stroke-width="1.3" fill="none"/></svg></div>
<div class="b" style="left:28px;top:54px"><svg viewBox="0 0 20 18"><circle cx="8" cy="7" r="4.5" fill="none" stroke="#111" stroke-width="1.4"/><path d="M11 10L16 16" stroke="#111" stroke-width="2"/></svg></div>
<div class="b" style="left:51px;top:54px"><svg viewBox="0 0 20 18"><path d="M5 15H8V13Q4 10 5 6Q7 2 10 2Q13 2 15 6Q16 10 12 13V15H15" fill="none" stroke="#111" stroke-width="1.8"/></svg></div>
<div class="b" style="left:72px;top:54px"><svg viewBox="0 0 20 18"><path d="M5 10V5M8 9V3M11 9V3M14 10V5M5 10Q4 15 10 16Q15 16 16 10L17 8" fill="none" stroke="#111" stroke-width="1.2"/></svg></div>
<div class="b" style="left:94px;top:54px"><svg viewBox="0 0 20 18"><path d="M3 16L5 12L13 4L15 6L7 14Z" fill="#fff" stroke="#111"/><path d="M12 3L15 1L18 4L16 7Z" fill="#111"/></svg></div>
<div class="grn"></div><div class="red"></div>
<svg class="a" style="left:166px;top:32px" width="14" height="14" viewBox="0 0 14 14"><path d="M2 3Q8 2 11 8" fill="none" stroke="#111" stroke-width="1.3"/><path d="M8 8L11 12L13 7Z" fill="#111"/><path d="M1 1L4 3L1 5Z" fill="#111"/></svg>
<div class="a" style="left:138px;top:62px;width:12px;height:12px;border:1px solid #999;background:#eee"><div class="a" style="left:2px;top:2px;width:4px;height:4px;background:#777"></div><div class="a" style="left:5px;top:5px;width:4px;height:4px;background:#bbb"></div></div>
<div class="tg">
<div class="tc" style="left:0;top:0">Pen<svg><use href="#pen"/></svg></div>
<div class="tc" style="left:41px;top:0">AirBrush<svg><use href="#air"/></svg></div>
<div class="tc" style="left:82px;top:0">Brush<svg><use href="#brush"/></svg></div>
<div class="tc" style="left:123px;top:0">Water<svg><use href="#water"/></svg></div>
<div class="tc" style="left:0;top:31px">Marker<svg><use href="#pen"/></svg></div>
<div class="tc" style="left:41px;top:31px">Eraser<svg><use href="#eras"/></svg></div>
<div class="tc" style="left:82px;top:31px">Select<svg><use href="#sel"/></svg></div>
<div class="tc" style="left:123px;top:31px">Deselect<svg><use href="#sel"/></svg></div>
<div class="tc" style="left:0;top:62px">Bucket<svg><use href="#bucket"/></svg></div>
<div class="tc" style="left:41px;top:62px">Binary<svg><use href="#pen"/></svg></div>
<div class="tc" style="left:82px;top:62px">Actryllic<svg><use href="#brush"/></svg></div>
<div class="tc" style="left:123px;top:62px">Blend<svg><use href="#brush"/></svg></div>
<div class="tc" style="left:0;top:93px">Water<br>9<svg><use href="#brush"/></svg></div>
<div class="tc" style="left:41px;top:93px">INK<svg><use href="#pen"/></svg></div>
<div class="tc s" style="left:82px;top:93px">Pen/SKE<svg><use href="#pen"/></svg></div>
<div class="tc" style="left:123px;top:93px">Pencil/SI<svg><use href="#brush"/></svg></div>
<div class="sb"><div class="ar u"></div><div class="th" style="top:18px;height:15px"></div><div class="ar d"></div></div>
</div>
<div class="a" style="left:85px;top:205px;width:18px;height:3px;background:#ddd"></div>
<div class="nm" style="top:211px">Normal</div>
<div class="shp" style="top:211px"><svg width="73" height="16"><g fill="#000"><path d="M4 13L10 4L16 13Z"/><path d="M22 13Q22 4 28 4Q34 4 34 13Z"/><path d="M40 13Q40 4 46 4H50Q52 4 52 13Z"/><rect x="57" y="1" width="15" height="14" fill="#4040d0"/><rect x="59" y="3" width="11" height="10"/></g></svg></div>
<div class="lb" style="top:236px">Size</div>
<div class="a" style="left:64px;top:236px;width:11px;height:12px;border:1px solid #888;background:#ccc"></div>
<div class="sl" style="top:235px"><i style="width:41px"></i><u>x 0.1</u><b>4.0</b></div>
<div class="lb" style="top:254px">Min size</div>
<div class="sl" style="top:254px;width:84px"><b>0%</b></div>
<div class="lb" style="top:277px">Density</div>
<div class="sl" style="top:276px"><i style="width:55px"></i><b>54</b></div>
<div class="dd" style="top:298px">[None]</div>
<div class="sm dis" style="top:298px"><u>Dens</u><b>50</b></div>
<div class="dd" style="top:320px">[None]</div>
<div class="sm dis" style="top:320px"><u>Tex.</u><b>95</b></div>
<div class="cb" style="left:4px;top:345px">✔</div><div class="lb" style="left:19px;top:345px">Advanced</div>
<div class="lb" style="top:365px">Quality</div>
<div class="dd" style="left:78px;top:363px;width:105px">1 (Fast)</div>
<div class="lb" style="top:385px">Hardness</div><div class="sl" style="top:384px"><i style="width:5px"></i><b>6</b></div>
<div class="lb" style="top:403px">Min density</div><div class="sl dis" style="top:402px"><b>0</b></div>
<div class="lb" style="top:421px">Max density</div><div class="sl dis" style="top:420px"><i style="right:1px"></i><b>100%</b></div>
<div class="lb" style="top:439px">Hard&lt;-&gt;Soft</div><div class="sl" style="top:438px"><i style="right:1px"></i><b>200</b></div>
<div class="lb" style="top:456px">Pressure:</div>
<div class="cb off" style="left:52px;top:456px"></div><div class="lb" style="left:67px;top:456px">Density</div>
<div class="cb" style="left:109px;top:456px">✔</div><div class="lb" style="left:124px;top:456px">Size</div>
<div class="cb dis" style="left:149px;top:456px"></div><div class="lb" style="left:164px;top:456px;color:#bbb">Clr</div>
<div class="bg" style="top:474px;height:316px">
<div class="cells" style="top:1px">
<div class="c"><i style="--d:1px"></i><s>0.7</s></div><div class="c"><i style="--d:1px"></i><s>0.8</s></div><div class="c"><i style="--d:1px"></i><s>1</s></div><div class="c"><i style="--d:1px"></i><s>1.5</s></div><div class="c"><i style="--d:1px"></i><s>2</s></div>
<div class="c"><i style="--d:1px"></i><s>2.3</s></div><div class="c"><i style="--d:1px"></i><s>2.6</s></div><div class="c"><i style="--d:2px"></i><s>3</s></div><div class="c"><i style="--d:2px"></i><s>3.5</s></div><div class="c s"><i style="--d:3px"></i><s>4</s></div>
<div class="c"><i style="--d:4px"></i><s>5</s></div><div class="c"><i style="--d:5px"></i><s>6</s></div><div class="c"><i style="--d:6px"></i><s>7</s></div><div class="c"><i style="--d:6px"></i><s>8</s></div><div class="c"><i style="--d:8px"></i><s>9</s></div>
<div class="c"><i style="--d:8px"></i><s>10</s></div><div class="c"><i style="--d:10px"></i><s>12</s></div><div class="c"><i style="--d:12px"></i><s>14</s></div><div class="c"><i style="--d:14px"></i><s>16</s></div><div class="c"><i style="--d:18px"></i><s>20</s></div>
<div class="c"><i style="--d:18px"></i><s>25</s></div><div class="c"><i style="--d:18px"></i><s>30</s></div><div class="c"><i style="--d:18px"></i><s>35</s></div><div class="c"><i style="--d:18px"></i><s>40</s></div><div class="c"><i style="--d:18px"></i><s>50</s></div>
<div class="c"><i style="--d:18px"></i><s>60</s></div><div class="c"><i style="--d:18px"></i><s>70</s></div><div class="c"><i style="--d:18px"></i><s>80</s></div><div class="c"><i style="--d:18px"></i><s>100</s></div><div class="c"><i style="--d:18px"></i><s>120</s></div>
<div class="c"><i style="--d:18px"></i><s>160</s></div><div class="c"><i style="--d:18px"></i><s>200</s></div><div class="c"><i style="--d:18px"></i><s>250</s></div><div class="c"><i style="--d:18px"></i><s>300</s></div><div class="c"><i style="--d:18px"></i><s>350</s></div>
<div class="c"><i style="--d:18px"></i><s>400</s></div><div class="c"><i style="--d:18px"></i><s>450</s></div><div class="c"><i style="--d:18px"></i><s>500</s></div>
</div>
<div class="sb"><div class="ar u lt"></div><div class="ar d lt"></div></div>
</div>
</div>

<!-- ============ PANEL 4 (top 2396) ============ -->
<div class="pan" style="top:2396px">
<div class="b" style="left:3px;top:10px"><svg viewBox="0 0 20 18"><circle cx="10" cy="9" r="6" fill="#fff" stroke="#555" stroke-width="1.6"/></svg></div>
<div class="b" style="left:26px;top:10px"><svg viewBox="0 0 20 18"><g fill="#111"><rect x="3" y="4" width="14" height="2.5"/><rect x="3" y="8" width="14" height="2.5"/><rect x="3" y="12" width="14" height="2.5"/></g></svg></div>
<div class="b" style="left:49px;top:10px"><svg viewBox="0 0 20 18"><g fill="#222"><rect x="3" y="4" width="14" height="3"/><rect x="3" y="8" width="14" height="1.5" fill="#888"/><rect x="3" y="11" width="14" height="3"/></g></svg></div>
<div class="b" style="left:72px;top:10px"><svg viewBox="0 0 20 18"><g fill="#555"><rect x="3" y="4" width="14" height="1.5"/><rect x="3" y="7" width="14" height="1.5"/><rect x="3" y="10" width="14" height="1.5"/><rect x="3" y="13" width="14" height="1.5"/></g></svg></div>
<div class="b" style="left:95px;top:10px"><svg viewBox="0 0 20 18"><g fill="none" stroke="#555" stroke-dasharray="1 1"><path d="M3 5H17M3 8H17M3 11H17M3 14H17"/></g></svg></div>
<div class="b" style="left:119px;top:10px"><svg viewBox="0 0 20 18"><ellipse cx="10" cy="9" rx="5" ry="4" fill="#444"/></svg></div>
<div class="b" style="left:5px;top:33px"><svg viewBox="0 0 20 18"><rect x="4" y="3" width="12" height="12" fill="none" stroke="#111" stroke-dasharray="2 1.5"/></svg></div>
<div class="b" style="left:28px;top:33px"><svg viewBox="0 0 20 18"><path d="M4 7 Q6 3 12 4 Q17 6 12 9 Q8 10 10 14" fill="none" stroke="#111" stroke-dasharray="2 1"/></svg></div>
<div class="b" style="left:51px;top:33px"><svg viewBox="0 0 20 18"><path d="M4 16 L12 7" stroke="#111" stroke-width="1.6"/><path d="M14 2V7M11.5 4.5H16.5" stroke="#666"/></svg></div>
<div class="e" style="left:72px;top:33px"></div><div class="e" style="left:94px;top:33px"></div>
<div class="b" style="left:5px;top:54px"><svg viewBox="0 0 20 18"><path d="M10 2V16M3 9H17M8 4L10 2L12 4M8 14L10 16L12 14M5 7L3 9L5 11M15 7L17 9L15 11" stroke="#111" stroke-width="1.3" fill="none"/></svg></div>
<div class="b" style="left:28px;top:54px"><svg viewBox="0 0 20 18"><circle cx="8" cy="7" r="4.5" fill="none" stroke="#111" stroke-width="1.4"/><path d="M11 10L16 16" stroke="#111" stroke-width="2"/></svg></div>
<div class="b" style="left:51px;top:54px"><svg viewBox="0 0 20 18"><path d="M5 15H8V13Q4 10 5 6Q7 2 10 2Q13 2 15 6Q16 10 12 13V15H15" fill="none" stroke="#111" stroke-width="1.8"/></svg></div>
<div class="b" style="left:72px;top:54px"><svg viewBox="0 0 20 18"><path d="M5 10V5M8 9V3M11 9V3M14 10V5M5 10Q4 15 10 16Q15 16 16 10L17 8" fill="none" stroke="#111" stroke-width="1.2"/></svg></div>
<div class="b" style="left:94px;top:54px"><svg viewBox="0 0 20 18"><path d="M3 16L5 12L13 4L15 6L7 14Z" fill="#fff" stroke="#111"/><path d="M12 3L15 1L18 4L16 7Z" fill="#111"/></svg></div>
<div class="grn"></div><div class="red"></div>
<svg class="a" style="left:166px;top:32px" width="14" height="14" viewBox="0 0 14 14"><path d="M2 3Q8 2 11 8" fill="none" stroke="#111" stroke-width="1.3"/><path d="M8 8L11 12L13 7Z" fill="#111"/><path d="M1 1L4 3L1 5Z" fill="#111"/></svg>
<div class="a" style="left:138px;top:62px;width:12px;height:12px;border:1px solid #999;background:#eee"><div class="a" style="left:2px;top:2px;width:4px;height:4px;background:#777"></div><div class="a" style="left:5px;top:5px;width:4px;height:4px;background:#bbb"></div></div>
<div class="tg">
<div class="tc" style="left:0;top:0">Pen<svg><use href="#pen"/></svg></div>
<div class="tc" style="left:41px;top:0">AirBrush<svg><use href="#air"/></svg></div>
<div class="tc" style="left:82px;top:0">Brush<svg><use href="#brush"/></svg></div>
<div class="tc" style="left:123px;top:0">Water<svg><use href="#water"/></svg></div>
<div class="tc" style="left:0;top:31px">Marker<svg><use href="#pen"/></svg></div>
<div class="tc" style="left:41px;top:31px">Eraser<svg><use href="#eras"/></svg></div>
<div class="tc" style="left:82px;top:31px">Select<svg><use href="#sel"/></svg></div>
<div class="tc" style="left:123px;top:31px">Deselect<svg><use href="#sel"/></svg></div>
<div class="tc" style="left:0;top:62px">Bucket<svg><use href="#bucket"/></svg></div>
<div class="tc" style="left:41px;top:62px">Binary<svg><use href="#pen"/></svg></div>
<div class="tc" style="left:82px;top:62px">Actryllic<svg><use href="#brush"/></svg></div>
<div class="tc s" style="left:123px;top:62px">Blend<svg><use href="#brush"/></svg></div>
<div class="tc" style="left:0;top:93px">Water<br>9<svg><use href="#brush"/></svg></div>
<div class="tc" style="left:41px;top:93px">INK<svg><use href="#pen"/></svg></div>
<div class="tc" style="left:82px;top:93px">Pen/SKE<svg><use href="#pen"/></svg></div>
<div class="tc" style="left:123px;top:93px">Pencil/SI<svg><use href="#brush"/></svg></div>
<div class="sb"><div class="ar u"></div><div class="th" style="top:18px;height:15px"></div><div class="ar d"></div></div>
</div>
<div class="a" style="left:85px;top:205px;width:18px;height:3px;background:#ddd"></div>
<div class="nm" style="top:211px">Normal</div>
<div class="shp" style="top:211px"><svg width="73" height="16"><g fill="#ccc"><path d="M4 13L10 4L16 13Z"/><path d="M22 13Q22 4 28 4Q34 4 34 13Z"/><path d="M40 13Q40 4 46 4H50Q52 4 52 13Z"/><rect x="58" y="4" width="12" height="9"/></g></svg></div>
<div class="lb" style="top:238px">Size</div>
<div class="a" style="left:64px;top:238px;width:11px;height:12px;border:1px solid #888;background:#ccc"></div>
<div class="sl" style="top:237px"><i style="width:3px"></i><u>x 1.0</u><b>4.0</b></div>
<div class="lb" style="top:256px">Min size</div>
<div class="sl" style="top:255px;width:84px"><i style="width:17px"></i><b>20%</b></div>
<div class="lb" style="top:278px">Density</div>
<div class="sl" style="top:276px"><i style="right:1px"></i><b>100</b></div>
<div class="dd" style="top:299px">Circular</div>
<div class="sm" style="top:299px"><i style="width:20px"></i><u>Dens</u><b>38</b></div>
<div class="dd" style="top:320px">[None]</div>
<div class="sm dis" style="top:320px"><u>Tex.</u><b>95</b></div>
<div class="lb" style="top:347px">Color blending</div>
<div class="sl" style="top:346px"><i style="width:50px"></i><b>49</b></div>
<div class="lb" style="top:365px">Opacity mix</div>
<div class="sl" style="top:364px"><i style="width:44px"></i><b>43</b></div>
<div class="lb" style="top:383px">Persistence</div>
<div class="sl" style="top:382px"><i style="width:73px"></i><b>71</b></div>
<div class="cb" style="left:78px;top:400px">✔</div><div class="lb" style="left:94px;top:400px">Keep opacity</div>
<div class="cb" style="left:4px;top:419px">✔</div><div class="lb" style="left:19px;top:419px">Advanced</div>
<div class="lb" style="top:439px">Quality</div>
<div class="dd" style="left:78px;top:437px;width:105px">3</div>
<div class="lb" style="top:460px">Hardness</div><div class="sl" style="top:459px"><b>0</b></div>
<div class="lb" style="top:478px">Min density</div><div class="sl" style="top:477px"><b>0</b></div>
<div class="lb" style="top:496px">Max density</div><div class="sl" style="top:495px"><i style="right:1px"></i><b>100%</b></div>
<div class="lb" style="top:514px">Hard&lt;-&gt;Soft</div><div class="sl" style="top:513px"><i style="width:52px"></i><b>100</b></div>
<div class="lb" style="top:531px">Pressure:</div>
<div class="cb" style="left:52px;top:531px">✔</div><div class="lb" style="left:67px;top:531px">Density</div>
<div class="cb" style="left:109px;top:531px">✔</div><div class="lb" style="left:124px;top:531px">Size</div>
<div class="cb" style="left:149px;top:531px">✔</div><div class="lb" style="left:164px;top:531px">Clr</div>
<div class="bg" style="top:548px;height:246px">
<div class="cells" style="top:-12px">
<div class="c"><s>0.7</s></div><div class="c"><s>0.8</s></div><div class="c"><s>1</s></div><div class="c"><s>1.5</s></div><div class="c"><s>2</s></div>
<div class="c"><i style="--d:1px"></i><s>2.3</s></div><div class="c"><i style="--d:1px"></i><s>2.6</s></div><div class="c"><i style="--d:2px"></i><s>3</s></div><div class="c"><i style="--d:2px"></i><s>3.5</s></div><div class="c s"><i style="--d:3px"></i><s>4</s></div>
<div class="c"><i style="--d:4px"></i><s>5</s></div><div class="c"><i style="--d:5px"></i><s>6</s></div><div class="c"><i style="--d:6px"></i><s>7</s></div><div class="c"><i style="--d:6px"></i><s>8</s></div><div class="c"><i style="--d:8px"></i><s>9</s></div>
<div class="c"><i style="--d:8px"></i><s>10</s></div><div class="c"><i style="--d:10px"></i><s>12</s></div><div class="c"><i style="--d:12px"></i><s>14</s></div><div class="c"><i style="--d:14px"></i><s>16</s></div><div class="c"><i style="--d:18px"></i><s>20</s></div>
<div class="c"><i style="--d:18px"></i><s>25</s></div><div class="c"><i style="--d:18px"></i><s>30</s></div><div class="c"><i style="--d:18px"></i><s>35</s></div><div class="c"><i style="--d:18px"></i><s>40</s></div><div class="c"><i style="--d:18px"></i><s>50</s></div>
<div class="c"><i style="--d:18px"></i><s>60</s></div><div class="c"><i style="--d:18px"></i><s>70</s></div><div class="c"><i style="--d:18px"></i><s>80</s></div><div class="c"><i style="--d:18px"></i><s>100</s></div><div class="c"><i style="--d:18px"></i><s>120</s></div>
<div class="c"><i style="--d:18px"></i><s>160</s></div><div class="c"><i style="--d:18px"></i><s>200</s></div><div class="c"><i style="--d:18px"></i><s>250</s></div><div class="c"><i style="--d:18px"></i><s>300</s></div><div class="c"><i style="--d:18px"></i><s>350</s></div>
<div class="c"><i style="--d:18px"></i><s>400</s></div><div class="c"><i style="--d:18px"></i><s>450</s></div><div class="c"><i style="--d:18px"></i><s>500</s></div>
</div>
<div class="sb"><div class="ar u"></div><div class="th" style="top:26px;bottom:18px"></div><div class="ar d"></div></div>
</div>
</div>

</body></html>
